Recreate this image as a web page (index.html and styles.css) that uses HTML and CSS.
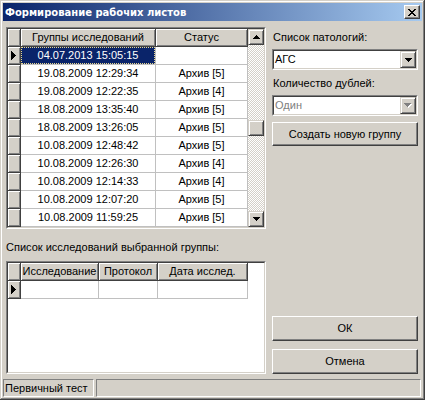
FILE: index.html
```html
<!DOCTYPE html>
<html lang="ru">
<head>
<meta charset="utf-8">
<title>Формирование рабочих листов</title>
<link rel="stylesheet" href="styles.css">
</head>
<body>
<div class="window">
  <div class="titlebar">
    <span class="title">Формирование рабочих листов</span>
    <div class="close">
      <svg width="8" height="7" viewBox="0 0 8 7" shape-rendering="crispEdges"><path d="M0 0h2v1h1v1h2v-1h1v-1h2v1h-1v1h-1v1h-1v1h1v1h1v1h1v1h-2v-1h-1v-1h-2v1h-1v1h-2v-1h1v-1h1v-1h1v-1h-1v-1h-1v-1h-1z" fill="#000"/></svg>
    </div>
  </div>

  <div class="main">
    <div class="left">
      <div class="grid grid-top">
        <div class="grid-in">
          <div class="grid-rows">
            <div class="row">
              <div class="cell ind fixed"></div>
              <div class="cell t1 fixed">Группы исследований</div>
              <div class="cell t2 fixed">Статус</div>
            </div>
            <div class="row">
              <div class="cell ind fixed"><svg width="5" height="9" viewBox="0 0 5 9" shape-rendering="crispEdges"><path d="M0 0h1v1h1v1h1v1h1v1h1v1h-1v1h-1v1h-1v1h-1v1h-1z" fill="#000"/></svg></div>
              <div class="cell t1 selected"><span class="focus">04.07.2013 15:05:15</span></div>
              <div class="cell t2"></div>
            </div>
            <div class="row"><div class="cell ind fixed"></div><div class="cell t1">19.08.2009 12:29:34</div><div class="cell t2">Архив [5]</div></div>
            <div class="row"><div class="cell ind fixed"></div><div class="cell t1">19.08.2009 12:22:35</div><div class="cell t2">Архив [4]</div></div>
            <div class="row"><div class="cell ind fixed"></div><div class="cell t1">18.08.2009 13:35:40</div><div class="cell t2">Архив [5]</div></div>
            <div class="row"><div class="cell ind fixed"></div><div class="cell t1">18.08.2009 13:26:05</div><div class="cell t2">Архив [5]</div></div>
            <div class="row"><div class="cell ind fixed"></div><div class="cell t1">10.08.2009 12:48:42</div><div class="cell t2">Архив [5]</div></div>
            <div class="row"><div class="cell ind fixed"></div><div class="cell t1">10.08.2009 12:26:30</div><div class="cell t2">Архив [4]</div></div>
            <div class="row"><div class="cell ind fixed"></div><div class="cell t1">10.08.2009 12:14:33</div><div class="cell t2">Архив [4]</div></div>
            <div class="row"><div class="cell ind fixed"></div><div class="cell t1">10.08.2009 12:07:20</div><div class="cell t2">Архив [5]</div></div>
            <div class="row"><div class="cell ind fixed"></div><div class="cell t1">10.08.2009 11:59:25</div><div class="cell t2">Архив [5]</div></div>
          </div>
          <div class="vscroll">
            <div class="sbtn"><svg width="7" height="4" viewBox="0 0 7 4" shape-rendering="crispEdges"><path d="M3 0h1v1h1v1h1v1h1v1H0v-1h1v-1h1v-1h1z" fill="#000"/></svg></div>
            <div class="sbtn thumb"></div>
            <div class="sbtn down"><svg width="7" height="4" viewBox="0 0 7 4" shape-rendering="crispEdges"><path d="M0 0h7v1h-1v1h-1v1h-1v1h-1v-1h-1v-1h-1v-1h-1z" fill="#000"/></svg></div>
          </div>
        </div>
      </div>

      <div class="label">Список исследований выбранной группы:</div>

      <div class="grid grid-bottom">
        <div class="grid-in">
          <div class="grid-rows">
            <div class="row">
              <div class="cell ind fixed"></div>
              <div class="cell b1 fixed">Исследование</div>
              <div class="cell b2 fixed">Протокол</div>
              <div class="cell b3 fixed">Дата исслед.</div>
            </div>
            <div class="row">
              <div class="cell ind fixed"><svg width="5" height="9" viewBox="0 0 5 9" shape-rendering="crispEdges"><path d="M0 0h1v1h1v1h1v1h1v1h1v1h-1v1h-1v1h-1v1h-1v1h-1z" fill="#000"/></svg></div>
              <div class="cell b1"></div>
              <div class="cell b2"></div>
              <div class="cell b3"></div>
            </div>
          </div>
        </div>
      </div>
    </div>

    <div class="right">
      <div class="lbl lbl1">Список патологий:</div>
      <div class="combo">
        <div class="combo-in">
          <span class="combo-text">АГС</span>
          <div class="sbtn cbtn"><svg width="7" height="4" viewBox="0 0 7 4" shape-rendering="crispEdges"><path d="M0 0h7v1h-1v1h-1v1h-1v1h-1v-1h-1v-1h-1v-1h-1z" fill="#000"/></svg></div>
        </div>
      </div>
      <div class="lbl lbl2">Количество дублей:</div>
      <div class="combo combo2">
        <div class="combo-in">
          <span class="combo-text disabled">Один</span>
          <div class="sbtn cbtn"><svg width="8" height="5" viewBox="0 0 8 5" shape-rendering="crispEdges"><path d="M1 1h7v1h-1v1h-1v1h-1v1h-1v-1h-1v-1h-1v-1h-1z" fill="#fff"/><path d="M0 0h7v1h-1v1h-1v1h-1v1h-1v-1h-1v-1h-1v-1h-1z" fill="#808080"/></svg></div>
        </div>
      </div>
      <div class="btn btn-new">Создать новую группу</div>
      <div class="btn btn-ok">ОК</div>
      <div class="btn btn-cancel">Отмена</div>
    </div>
  </div>

  <div class="statusbar">
    <div class="panel p1">Первичный тест</div>
    <div class="panel p2"></div>
  </div>
</div>
</body>
</html>
```

FILE: styles.css
```css
html, body {
  margin: 0;
  padding: 0;
  background: #d4d0c8;
}

body {
  font-family: "Liberation Sans", Arial, sans-serif;
  font-size: 11px;
  color: #000;
}

.window {
  width: 425px;
  height: 400px;
  box-sizing: border-box;
  padding: 3px;
  background: #d4d0c8;
  box-shadow: inset -1px -1px #404040, inset 1px 1px #d4d0c8, inset -2px -2px #808080, inset 2px 2px #fff;
  display: flex;
  flex-direction: column;
}

.titlebar {
  height: 18px;
  flex: none;
  display: flex;
  align-items: center;
  background: linear-gradient(to right, #0a246a, #a6caf0);
}

.title {
  flex: 1;
  padding-left: 2px;
  color: #fff;
  font-family: "DejaVu Sans", sans-serif;
  font-weight: bold;
  font-size: 10px;
  white-space: nowrap;
}

.close {
  width: 16px;
  height: 14px;
  margin-right: 2px;
  box-sizing: border-box;
  background: #d4d0c8;
  border: 1px solid;
  border-color: #fff #404040 #404040 #fff;
  box-shadow: inset -1px -1px #808080;
  display: flex;
  align-items: center;
  justify-content: center;
}

.close svg { display: block; margin-left: -1px; }

.main {
  flex: none;
  display: grid;
  grid-template-columns: 260px 146px;
  column-gap: 6px;
  padding: 6px 0 0 3px;
}

.left {
  display: flex;
  flex-direction: column;
}

.grid {
  box-sizing: border-box;
  border: 1px solid;
  border-color: #808080 #fff #fff #808080;
}

.grid-in {
  height: 100%;
  box-sizing: border-box;
  border: 1px solid;
  border-color: #404040 #d4d0c8 #d4d0c8 #404040;
  background: #fff;
  display: flex;
  overflow: hidden;
}

.grid-top { height: 202px; }
.grid-bottom { height: 113px; }

.grid-rows {
  flex: 1;
  display: flex;
  flex-direction: column;
}

.row {
  display: flex;
  height: 18px;
  flex: none;
}

.cell {
  flex: none;
  box-sizing: border-box;
  height: 18px;
  border-right: 1px solid #c0c0c0;
  border-bottom: 1px solid #c0c0c0;
  line-height: 17px;
  text-align: center;
  white-space: nowrap;
  overflow: hidden;
}

.fixed {
  background: #d4d0c8;
  border-color: #404040;
  box-shadow: inset 1px 1px #fff, inset -1px -1px #808080;
}

.ind {
  width: 13px;
  display: flex;
  align-items: center;
  padding-left: 3px;
}

.ind svg { display: block; }

.t1 { width: 135px; }
.t2 { width: 92px; }

.b1 { width: 78px; }
.b2 { width: 59px; }
.b3 { width: 90px; }

.selected {
  background: #0a246a;
  color: #fff;
}

.focus {
  display: block;
  height: 100%;
  box-sizing: border-box;
  border: 1px dotted #e8d890;
  line-height: 15px;
}

.vscroll {
  width: 16px;
  flex: none;
  display: flex;
  flex-direction: column;
  background: repeating-conic-gradient(#fff 0 25%, #d4d0c8 0 50%) 0 0 / 2px 2px;
}

.sbtn {
  flex: none;
  width: 16px;
  height: 16px;
  box-sizing: border-box;
  background: #d4d0c8;
  border: 1px solid;
  border-color: #d4d0c8 #404040 #404040 #d4d0c8;
  box-shadow: inset 1px 1px #fff, inset -1px -1px #808080;
  display: flex;
  align-items: center;
  justify-content: center;
}

.sbtn svg { display: block; }

.thumb { margin-top: 75px; }
.down { margin-top: auto; }

.label {
  line-height: 13px;
  margin-top: 12px;
  margin-bottom: 7px;
  white-space: nowrap;
}

.right {
  display: flex;
  flex-direction: column;
}

.lbl {
  line-height: 13px;
  padding-left: 1px;
  white-space: nowrap;
}

.lbl1 { margin-top: 4px; margin-bottom: 5px; }
.lbl2 { margin-top: 7px; margin-bottom: 5px; }

.combo {
  height: 21px;
  box-sizing: border-box;
  border: 1px solid;
  border-color: #808080 #fff #fff #808080;
}

.combo-in {
  height: 100%;
  box-sizing: border-box;
  border: 1px solid;
  border-color: #404040 #d4d0c8 #d4d0c8 #404040;
  background: #fff;
  display: flex;
}

.combo-text {
  flex: 1;
  line-height: 17px;
  padding-left: 1px;
}

.combo-text.disabled { color: #808080; }

.cbtn {
  height: 17px;
}

.btn {
  box-sizing: border-box;
  border: 1px solid;
  border-color: #fff #404040 #404040 #fff;
  box-shadow: inset -1px -1px #808080;
  background: #d4d0c8;
  text-align: center;
  white-space: nowrap;
}

.btn-new {
  margin-top: 6px;
  height: 24px;
  line-height: 22px;
}

.btn-ok {
  margin-top: auto;
  height: 25px;
  line-height: 23px;
}

.btn-cancel {
  margin-top: 8px;
  height: 25px;
  line-height: 23px;
}

.statusbar {
  margin-top: auto;
  height: 18px;
  flex: none;
  display: flex;
}

.panel {
  height: 18px;
  box-sizing: border-box;
  border: 1px solid;
  border-color: #808080 #fff #fff #808080;
  line-height: 16px;
  padding-left: 1px;
  white-space: nowrap;
}

.p1 { width: 91px; }
.p2 { flex: 1; margin-left: 2px; margin-right: 1px; }
```
